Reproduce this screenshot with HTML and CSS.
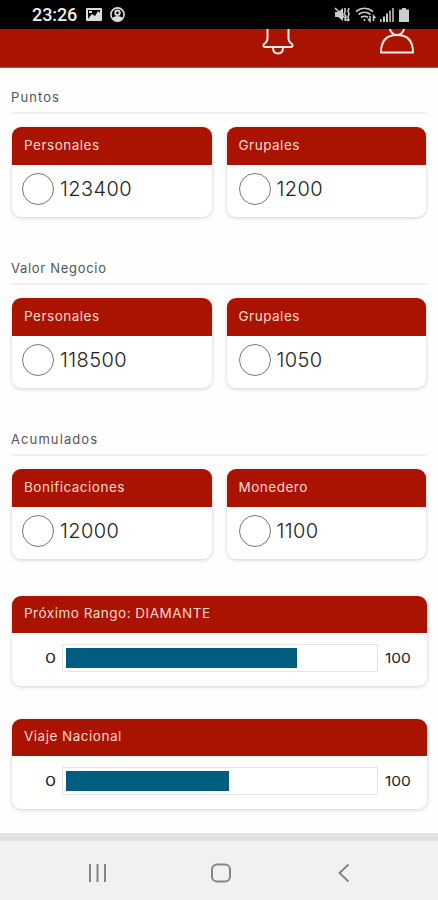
FILE: index.html
```html
<!DOCTYPE html>
<html lang="es">
  <head>
    <meta charset="utf-8">
    <title>Resumen</title>
    <link rel="stylesheet" href="styles.css">
  </head>
  <body>
    <div class="status">
      <span class="status__time">23:26</span>
      <svg class="status__left" width="40" height="16" viewBox="0 0 40 16">
        <path fill="#ddd" fill-rule="evenodd" d="M1 1h14q1 0 1 1v11q0 1-1 1H1q-1 0-1-1V2q0-1 1-1zM2 3v9l4-5 3 2 3-5 2 2V3zM3 4h3v2H3z"/>
        <circle cx="31.500" cy="7.500" r="6.600" fill="none" stroke="#ddd" stroke-width="1.600"/>
        <circle cx="31.500" cy="5.800" r="2.300" fill="none" stroke="#ddd" stroke-width="1.800"/>
        <path fill="#ddd" d="M26 11q5.500-4 11 0-2 3.500-5.500 3.500T26 11z"/>
      </svg>
      <svg class="status__right" width="75" height="17" viewBox="0 0 75 17">
        <g fill="#ccc">
          <path d="M0 5h3l5-4v13l-5-4H0z"/>
          <path d="M45 12h1.500v3H45zM48 9.500h2V15h-2zM51 6.500h2V15h-2z"/>
          <path fill="#999" d="M54 3.500h2V15h-2zM57 1h2v14h-2z"/>
          <path d="M64 2.500h3V1h4v1.500h3V15H64z"/>
        </g>
        <g fill="none" stroke="#ccc" stroke-width="1.600">
          <path d="M0 1l13 13M10 1v4l-1 2 2 2-1 5M14 1l-1 3 1 3-1 3 1 4"/>
          <path d="M21 4.500q8.500-6.500 17 0M23.500 7.500q6-4.500 12 0M26 10.500q3.500-2.500 7 0"/>
          <path d="M29.500 12v2M35 9v5l-2-2M38.500 14V9l2 2"/>
        </g>
      </svg>
    </div>

    <div class="header">
      <svg width="34" height="27" viewBox="0 0 34 27">
        <path d="M6.500-2v11q0 4-3.500 6-1.500 3 1 3h26q2.500 0 1-3-3.500-2-3.500-6V-2M12 18.500q0 6 5 6t5-6"/>
      </svg>
      <svg width="34" height="27" viewBox="0 0 34 27">
        <path d="M9.500-1q2 7 7.500 7t7.500-7M1 23.500q0-17.500 16-17.500t16 17.500z"/>
      </svg>
    </div>

    <div class="content">
      <div class="section">
        <div class="section__title section__title--puntos">Puntos</div>
        <div class="section__cards">
          <div class="card">
            <div class="card__header">Personales</div>
            <div class="card__body"><span class="card__circle"></span><span class="card__value">123400</span></div>
          </div>
          <div class="card">
            <div class="card__header">Grupales</div>
            <div class="card__body"><span class="card__circle"></span><span class="card__value">1200</span></div>
          </div>
        </div>
      </div>

      <div class="section">
        <div class="section__title">Valor Negocio</div>
        <div class="section__cards">
          <div class="card">
            <div class="card__header">Personales</div>
            <div class="card__body"><span class="card__circle"></span><span class="card__value">118500</span></div>
          </div>
          <div class="card">
            <div class="card__header">Grupales</div>
            <div class="card__body"><span class="card__circle"></span><span class="card__value">1050</span></div>
          </div>
        </div>
      </div>

      <div class="section">
        <div class="section__title section__title--puntos">Acumulados</div>
        <div class="section__cards">
          <div class="card">
            <div class="card__header">Bonificaciones</div>
            <div class="card__body"><span class="card__circle"></span><span class="card__value">12000</span></div>
          </div>
          <div class="card">
            <div class="card__header">Monedero</div>
            <div class="card__body"><span class="card__circle"></span><span class="card__value">1100</span></div>
          </div>
        </div>
      </div>

      <div class="goals">
        <div class="card">
          <div class="card__header card__header--goal">Próximo Rango: DIAMANTE</div>
          <div class="goal">
            <span class="goal__min">0</span>
            <div class="goal__track"><div class="goal__fill" style="width: 75%"></div></div>
            <span class="goal__max">100</span>
          </div>
        </div>
        <div class="card">
          <div class="card__header card__header--goal">Viaje Nacional</div>
          <div class="goal">
            <span class="goal__min">0</span>
            <div class="goal__track"><div class="goal__fill" style="width: 53%"></div></div>
            <span class="goal__max">100</span>
          </div>
        </div>
      </div>
    </div>

    <div class="nav">
      <svg width="20" height="20" viewBox="0 0 20 20"><path d="M2 1v18M9.500 1v18M17 1v18"/></svg>
      <svg width="20" height="20" viewBox="0 0 20 20"><rect x="1" y="1.500" width="18" height="17" rx="5"/></svg>
      <svg width="20" height="20" viewBox="0 0 20 20"><path d="M14.500 1.500L5.500 10l9 8.500"/></svg>
    </div>
  </body>
</html>
```
FILE: styles.css
```css
* {
  box-sizing: border-box;
}
body {
  margin: 0;
  width: 438px;
  height: 900px;
  display: flex;
  flex-direction: column;
  overflow: hidden;
  background: #fefefe;
  font-family: Inter, "Open Sans", sans-serif;
}
svg {
  display: block;
}

.status {
  height: 29px;
  display: flex;
  align-items: center;
  padding: 1px 28px 0 32px;
  background: #000;
  color: #eee;
}
.status__time {
  width: 54px;
  font: 500 18px/28px Roboto, sans-serif;
  letter-spacing: -.1px;
}
.status__right {
  margin-left: auto;
  overflow: visible;
}

.header {
  height: 39px;
  display: flex;
  justify-content: flex-end;
  gap: 85px;
  padding-right: 24px;
  background: #a91300;
  border-bottom: 1px solid #c9493b;
}
.header svg {
  fill: none;
  stroke: #ffe9e5;
  stroke-width: 2;
}

.content {
  flex: 1;
  padding: 18px 11px 0;
}
.section {
  height: 171px;
}
.section__title {
  height: 28px;
  border-bottom: 2px solid #efefef;
  color: #555;
  font-size: 13px;
  line-height: 22px;
  letter-spacing: .7px;
}
.section__title--puntos {
  letter-spacing: 1.1px;
}
.section__cards {
  display: grid;
  grid-template-columns: 1fr 1fr;
  gap: 15px;
  padding: 13px 1px 0;
}

.card {
  height: 90px;
  overflow: hidden;
  background: #fff;
  border-radius: 9px;
  box-shadow: 0 1px 4px rgba(0,0,0,.18);
}
.card__header {
  height: 38px;
  padding-left: 12px;
  background: #a91300;
  color: #ffd9d0;
  font-size: 13.500px;
  line-height: 36px;
  letter-spacing: .5px;
}
.card__header--goal {
  height: 37px;
  line-height: 35px;
}
.card__body {
  display: flex;
  align-items: center;
  gap: 6px;
  height: 48px;
  padding-left: 10px;
}
.card + .card .card__body {
  padding-left: 12px;
}
.card__circle {
  width: 32px;
  height: 32px;
  border: 1px solid #777;
  border-radius: 50%;
}
.card__value {
  color: #222;
  font-size: 20px;
  font-weight: 300;
  letter-spacing: .4px;
}

.goals {
  display: grid;
  gap: 33px;
  margin: -3px 0 0 1px;
}
.goal {
  display: flex;
  align-items: center;
  height: 50px;
  padding-left: 33px;
  color: #222;
  font-size: 13.500px;
}
.goal__min {
  width: 17px;
  transform: scaleX(1.3);
  transform-origin: left;
}
.goal__track {
  width: 316px;
  height: 28px;
  padding: 3px;
  border: 1px solid #e5e5e5;
}
.goal__fill {
  height: 20px;
  background: #005d80;
}
.goal__max {
  margin-left: 7px;
  transform: scaleX(1.15);
  transform-origin: left;
}

.nav {
  height: 67px;
  display: flex;
  justify-content: center;
  gap: 103px;
  padding: 22px 0 0 4px;
  border-top: 8px solid #e2e2e2;
  background: #f1f1f1;
}
.nav svg {
  fill: none;
  stroke: #858585;
  stroke-width: 2;
}
```
